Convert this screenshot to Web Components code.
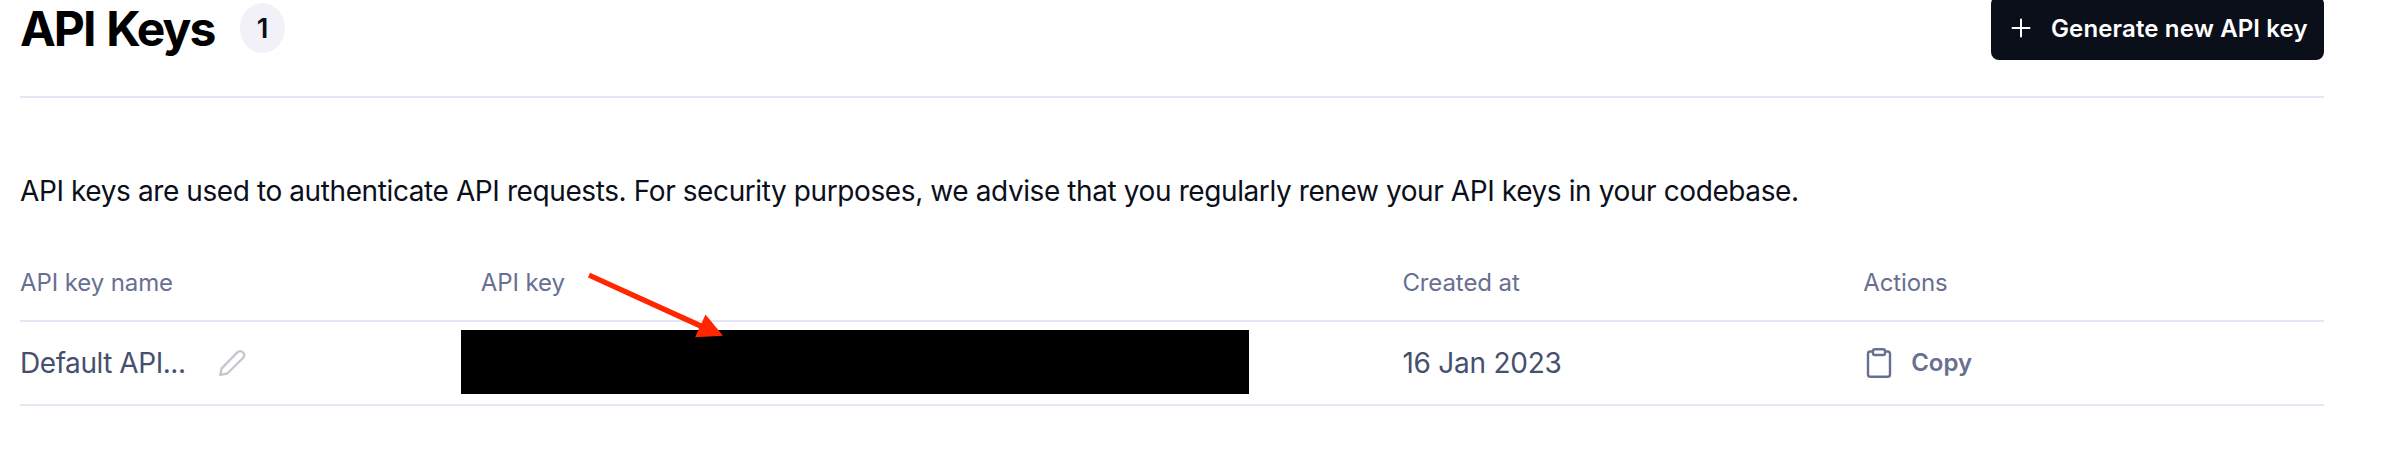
<!DOCTYPE html>
<html lang="en">
<head>
<meta charset="utf-8">
<title>API Keys</title>
<style>
  html, body { margin: 0; background: #fff; }
  body { width: 2390px; height: 476px; overflow: hidden; font-family: Inter, "Liberation Sans", sans-serif; color: #0b0f19; }
</style>
</head>
<body>
<api-keys-page></api-keys-page>
<script>
const define = (name, html) => {
  const tpl = document.createElement('template');
  tpl.innerHTML = html;
  customElements.define(name, class extends HTMLElement {
    constructor() {
      super();
      this.attachShadow({ mode: 'open' }).appendChild(tpl.content.cloneNode(true));
    }
  });
};

define('count-badge', `
<style>
  :host { display: flex; align-items: center; justify-content: center; width: 45px; height: 50px; border-radius: 50%; background: #f2f1f7; color: #0b0f19; font-size: 27.5px; font-weight: 600; line-height: 50px; }
</style><slot></slot>`);

define('page-header', `
<style>
  :host { display: flex; justify-content: space-between; height: 96px; border-bottom: 2px solid #e7e5f4; }
  .title { display: flex; gap: 24px; padding-top: 3px; }
  h1 { margin: 0; width: 196px; white-space: nowrap; font-size: 48px; line-height: 52px; font-weight: 700; letter-spacing: -2px; word-spacing: 2.4px; color: #000; }
</style>
<div class="title"><h1><slot></slot></h1><slot name="badge"></slot></div>
<slot name="action"></slot>`);

define('primary-button', `
<style>
  :host { display: block; }
  button { box-sizing: border-box; display: flex; align-items: center; gap: 20px; margin: -4px 0 0; width: 333px; height: 64px; padding: 0 0 0 20px; border: 0; border-radius: 8px; background: #0b0f19; color: #fff; font: 640 24px/64px Inter, sans-serif; letter-spacing: .14px; white-space: nowrap; }
  svg { display: block; flex: none; }
  span { padding-top: 2px; }
</style>
<button><svg width="20" height="20" viewBox="0 0 20 20" fill="none" stroke="#fff" stroke-width="2" stroke-linecap="round"><path d="M10 1.5v17M1.5 10h17"/></svg><span><slot></slot></span></button>`);

define('page-intro', `
<style>
  :host { display: block; padding-top: 71px; height: 91px; font-size: 28px; line-height: 44px; letter-spacing: -.402px; white-space: nowrap; }
</style><slot></slot>`);

define('key-row', `
<style>
  :host { box-sizing: border-box; display: grid; grid-template-columns: 1fr 2fr 1fr 1fr; height: 84px; align-items: center; border-bottom: 2px solid #e7e5f4; font-size: 28px; line-height: 40px; letter-spacing: -.25px; color: #46506e; white-space: nowrap; }
  :host([header]) { height: 62px; align-items: start; font-size: 24px; line-height: 40px; letter-spacing: -.1px; color: #686f91; padding-top: 3px; }
</style><slot></slot>`);

define('key-name', `
<style>
  :host { display: flex; align-items: center; }
  .name { width: 198px; letter-spacing: -.45px; }
  svg { display: block; }
</style>
<span class="name"><slot></slot></span>
<svg width="30" height="30" viewBox="0 0 30 30" fill="none" stroke="#c7c7cf" stroke-width="2.4" stroke-linejoin="round"><path d="M2.3 26.9 3.5 20.6 19.3 4.3a4 4 0 0 1 5.7 5.7L9.3 25.5Z"/></svg>`);

define('redacted-key', `
<style>
  :host { display: block; position: relative; width: 788px; height: 64px; margin: -2px 0 0 -20px; background: #000; }
  svg { position: absolute; left: 119px; top: -65px; }
</style>
<svg width="150" height="80" viewBox="580 265 150 80" fill="#ff2600"><path d="M588 277.4 590 272.8 701.5 323.2 705.5 314.6 723 335.8 695.2 337.2 699 328.3Z"/></svg>`);

define('copy-action', `
<style>
  :host { display: flex; align-items: center; gap: 18px; padding-left: 2px; font-size: 24px; font-weight: 620; letter-spacing: 0; color: #686f91; }
  svg { display: block; }
</style>
<svg width="28" height="32" viewBox="0 0 28 32" fill="none" stroke="#686f91" stroke-width="2.4" stroke-linejoin="round"><path d="M7.5 4.5H5.2a2.2 2.2 0 0 0-2.2 2.2V27.6A2.2 2.2 0 0 0 5.2 29.8H22.8A2.2 2.2 0 0 0 25 27.6V6.7A2.2 2.2 0 0 0 22.8 4.5H20.5"/><rect x="8" y="2.2" width="12" height="5.8" rx="1.8"/></svg>
<span><slot></slot></span>`);

define('api-keys-page', `
<style>
  :host { display: block; padding: 0 66px 0 20px; }
</style>
<page-header>API Keys<count-badge slot="badge">1</count-badge><primary-button slot="action">Generate new API key</primary-button></page-header>
<page-intro>API keys are used to authenticate API requests. For security purposes, we advise that you regularly renew your API keys in your codebase.</page-intro>
<key-row header><span>API key name</span><span>API key</span><span>Created at</span><span>Actions</span></key-row>
<key-row><key-name>Default API...</key-name><redacted-key></redacted-key><span>16 Jan 2023</span><copy-action>Copy</copy-action></key-row>`);
</script>
</body>
</html>
